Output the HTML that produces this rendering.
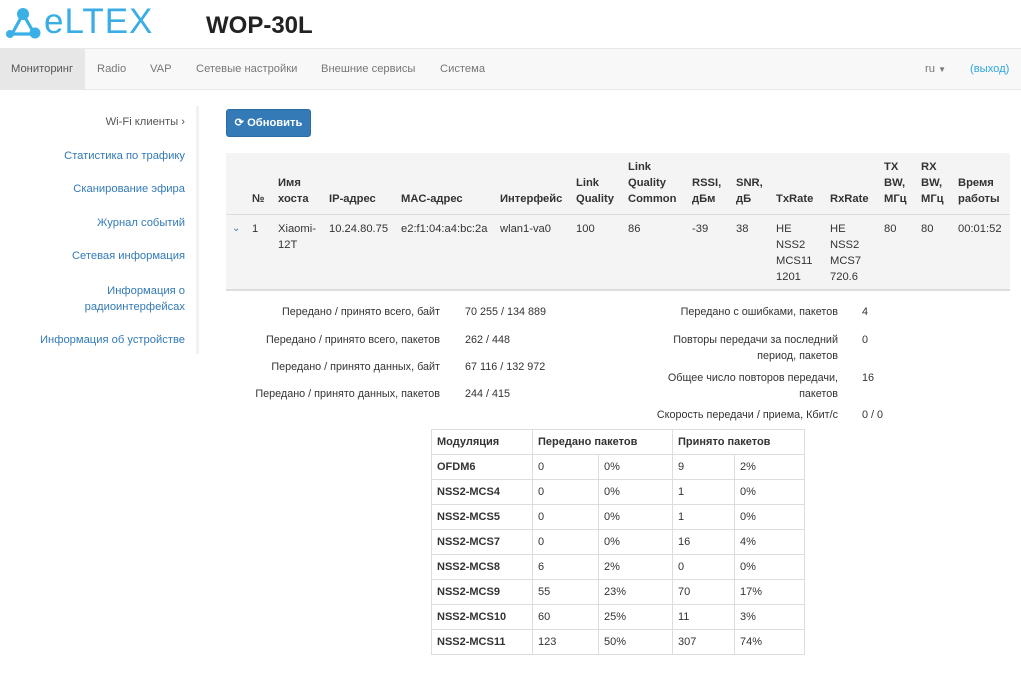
<!DOCTYPE html>
<html><head><meta charset="utf-8"><style>
*{margin:0;padding:0;box-sizing:border-box}
body{width:1021px;height:694px;background:#fff;font-family:"Liberation Sans",Arial,sans-serif;font-size:11.2px;color:#333;position:relative;overflow:hidden}
.a{position:absolute;white-space:nowrap}
.r{text-align:right}
.b{font-weight:bold}
.l{color:#337ab7}
.h{line-height:16px}
table{border-collapse:collapse;position:absolute;left:431px;top:429px;table-layout:fixed}
td{border:1px solid #ddd;height:25px;padding:0 5px;font-size:11px}
</style></head><body>
<svg class="a" style="left:4px;top:6px" width="40" height="34" viewBox="0 0 40 34">
<g stroke="#3bb0e6" stroke-width="3.2" fill="none"><line x1="19" y1="8" x2="8" y2="28"/><line x1="19" y1="8" x2="30" y2="27"/><line x1="5" y1="28" x2="30" y2="28"/></g>
<g fill="#3bb0e6"><circle cx="19" cy="8" r="6"/><circle cx="31" cy="27" r="5.5"/><circle cx="6" cy="28" r="4"/></g></svg>
<div class="a" style="left:44px;top:2px;font-size:35px;color:#3aaee4;letter-spacing:1px">eLTEX</div>
<div class="a b" style="left:206px;top:12px;font-size:24px;color:#222">WOP-30L</div>
<div class="a" style="left:0;top:48px;width:1021px;height:42px;background:#f8f8f8;border-top:1px solid #e7e7e7;border-bottom:1px solid #e7e7e7"></div>
<div class="a" style="left:0;top:49px;width:85px;height:40px;background:#e7e7e7"></div>
<div class="a" style="left:11px;top:63px;color:#555">Мониторинг</div>
<div class="a" style="left:97px;top:63px;color:#777">Radio</div>
<div class="a" style="left:150px;top:63px;color:#777">VAP</div>
<div class="a" style="left:196px;top:63px;color:#777">Сетевые настройки</div>
<div class="a" style="left:321px;top:63px;color:#777">Внешние сервисы</div>
<div class="a" style="left:440px;top:63px;color:#777">Система</div>
<div class="a" style="left:925px;top:63px;color:#777">ru <span style="font-size:8px">▼</span></div>
<div class="a l" style="left:970px;top:63px;color:#2ea6dd">(выход)</div>
<div class="a" style="left:196px;top:106px;width:3px;height:248px;background:#f2f2f2"></div>
<div class="a r" style="right:836px;top:116px;color:#555">Wi-Fi клиенты ›</div>
<div class="a r l" style="right:836px;top:150px">Статистика по трафику</div>
<div class="a r l" style="right:836px;top:183px">Сканирование эфира</div>
<div class="a r l" style="right:836px;top:217px">Журнал событий</div>
<div class="a r l" style="right:836px;top:250px">Сетевая информация</div>
<div class="a r l h" style="right:836px;top:283px">Информация о<br>радиоинтерфейсах</div>
<div class="a r l" style="right:836px;top:334px">Информация об устройстве</div>
<div class="a b" style="left:226px;top:109px;width:85px;height:28px;background:#337ab7;border-radius:3px;color:#fff;line-height:26px;text-align:center;border:1px solid #2e6da4">⟳ Обновить</div>
<div class="a" style="left:226px;top:153px;width:784px;height:138px;background:#f4f4f4;border-bottom:2px solid #ddd"></div>
<div class="a" style="left:226px;top:214px;width:784px;height:1px;background:#ddd"></div>
<div class="b">
<div class="a h" style="left:252px;top:191px">№</div>
<div class="a h" style="left:278px;top:175px">Имя<br>хоста</div>
<div class="a h" style="left:329px;top:191px">IP-адрес</div>
<div class="a h" style="left:401px;top:191px">MAC-адрес</div>
<div class="a h" style="left:500px;top:191px">Интерфейс</div>
<div class="a h" style="left:576px;top:175px">Link<br>Quality</div>
<div class="a h" style="left:628px;top:159px">Link<br>Quality<br>Common</div>
<div class="a h" style="left:692px;top:175px">RSSI,<br>дБм</div>
<div class="a h" style="left:736px;top:175px">SNR,<br>дБ</div>
<div class="a h" style="left:776px;top:191px">TxRate</div>
<div class="a h" style="left:830px;top:191px">RxRate</div>
<div class="a h" style="left:884px;top:159px">TX<br>BW,<br>МГц</div>
<div class="a h" style="left:921px;top:159px">RX<br>BW,<br>МГц</div>
<div class="a h" style="left:958px;top:175px">Время<br>работы</div>
</div>
<div class="a h l" style="left:232px;top:221px;font-size:10px">⌄</div>
<div class="a h" style="left:252px;top:221px">1</div>
<div class="a h" style="left:278px;top:221px">Xiaomi-<br>12T</div>
<div class="a h" style="left:329px;top:221px">10.24.80.75</div>
<div class="a h" style="left:401px;top:221px">e2:f1:04:a4:bc:2a</div>
<div class="a h" style="left:500px;top:221px">wlan1-va0</div>
<div class="a h" style="left:576px;top:221px">100</div>
<div class="a h" style="left:628px;top:221px">86</div>
<div class="a h" style="left:692px;top:221px">-39</div>
<div class="a h" style="left:736px;top:221px">38</div>
<div class="a h" style="left:776px;top:221px">HE<br>NSS2<br>MCS11<br>1201</div>
<div class="a h" style="left:830px;top:221px">HE<br>NSS2<br>MCS7<br>720.6</div>
<div class="a h" style="left:884px;top:221px">80</div>
<div class="a h" style="left:921px;top:221px">80</div>
<div class="a h" style="left:958px;top:221px">00:01:52</div>
<div style="font-size:10.8px">
<div class="a r h" style="right:581px;top:304px">Передано / принято всего, байт</div>
<div class="a h" style="left:465px;top:304px">70 255 / 134 889</div>
<div class="a r h" style="right:581px;top:332px">Передано / принято всего, пакетов</div>
<div class="a h" style="left:465px;top:332px">262 / 448</div>
<div class="a r h" style="right:581px;top:359px">Передано / принято данных, байт</div>
<div class="a h" style="left:465px;top:359px">67 116 / 132 972</div>
<div class="a r h" style="right:581px;top:386px">Передано / принято данных, пакетов</div>
<div class="a h" style="left:465px;top:386px">244 / 415</div>
<div class="a r h" style="right:183px;top:304px">Передано с ошибками, пакетов</div>
<div class="a h" style="left:862px;top:304px">4</div>
<div class="a r h" style="right:183px;top:332px">Повторы передачи за последний<br>период, пакетов</div>
<div class="a h" style="left:862px;top:332px">0</div>
<div class="a r h" style="right:183px;top:370px">Общее число повторов передачи,<br>пакетов</div>
<div class="a h" style="left:862px;top:370px">16</div>
<div class="a r h" style="right:183px;top:407px">Скорость передачи / приема, Кбит/с</div>
<div class="a h" style="left:862px;top:407px">0 / 0</div>
</div>
<table>
<colgroup><col style="width:101px"><col style="width:66px"><col style="width:74px"><col style="width:62px"><col style="width:70px"></colgroup>
<tr class="b"><td>Модуляция</td><td colspan="2">Передано пакетов</td><td colspan="2">Принято пакетов</td></tr>
<tr><td class="b">OFDM6</td><td>0</td><td>0%</td><td>9</td><td>2%</td></tr>
<tr><td class="b">NSS2-MCS4</td><td>0</td><td>0%</td><td>1</td><td>0%</td></tr>
<tr><td class="b">NSS2-MCS5</td><td>0</td><td>0%</td><td>1</td><td>0%</td></tr>
<tr><td class="b">NSS2-MCS7</td><td>0</td><td>0%</td><td>16</td><td>4%</td></tr>
<tr><td class="b">NSS2-MCS8</td><td>6</td><td>2%</td><td>0</td><td>0%</td></tr>
<tr><td class="b">NSS2-MCS9</td><td>55</td><td>23%</td><td>70</td><td>17%</td></tr>
<tr><td class="b">NSS2-MCS10</td><td>60</td><td>25%</td><td>11</td><td>3%</td></tr>
<tr><td class="b">NSS2-MCS11</td><td>123</td><td>50%</td><td>307</td><td>74%</td></tr>
</table>
</body></html>
